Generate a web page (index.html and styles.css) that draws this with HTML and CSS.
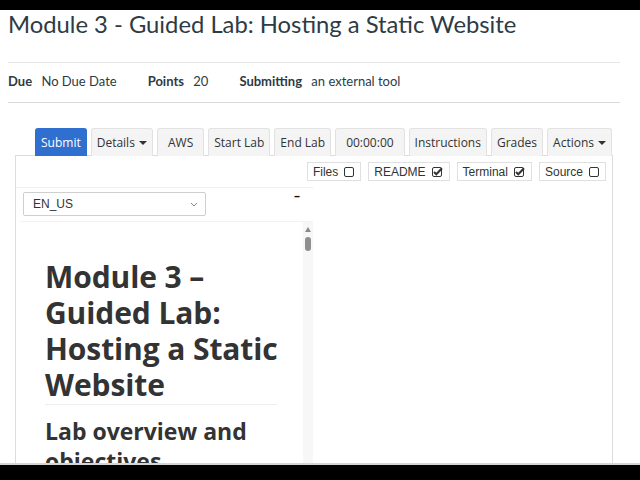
FILE: index.html
```html
<!DOCTYPE html>
<html lang="en">
  <head>
    <meta charset="UTF-8" />
    <meta name="viewport" content="width=device-width, initial-scale=1.0" />
    <title>Module 3 - Guided Lab: Hosting a Static Website</title>
    <link rel="stylesheet" href="styles.css">
  </head>
  <body>
    <div class="topbar"></div>
    <h1 class="title">Module 3 - Guided Lab: Hosting a Static Website</h1>
    <ul class="meta">
      <li><b>Due</b> No Due Date</li>
      <li><b>Points</b> 20</li>
      <li><b>Submitting</b> an external tool</li>
    </ul>
    <div class="lab">
      <nav class="toolbar">
        <button class="tool primary">Submit</button>
        <button class="tool">Details <span class="caret"></span></button>
        <button class="tool wide">AWS</button>
        <button class="tool">Start Lab</button>
        <button class="tool">End Lab</button>
        <button class="tool wide">00:00:00</button>
        <button class="tool">Instructions</button>
        <button class="tool">Grades</button>
        <button class="tool">Actions <span class="caret"></span></button>
      </nav>
      <div class="panel">
        <div class="toggles">
          <label class="toggle">Files
            <svg width="10" height="10" viewBox="0 0 10 10"><rect x="0.5" y="0.5" width="9" height="9" rx="1.5" fill="none" stroke="#333"/></svg>
          </label>
          <label class="toggle">README
            <svg width="11" height="10" viewBox="0 0 11 10"><rect x="0.5" y="0.5" width="9" height="9" rx="1.5" fill="none" stroke="#333"/><path d="M2 5 L4.3 7.3 L10 1.2" fill="none" stroke="#333" stroke-width="2"/></svg>
          </label>
          <label class="toggle">Terminal
            <svg width="11" height="10" viewBox="0 0 11 10"><rect x="0.5" y="0.5" width="9" height="9" rx="1.5" fill="none" stroke="#333"/><path d="M2 5 L4.3 7.3 L10 1.2" fill="none" stroke="#333" stroke-width="2"/></svg>
          </label>
          <label class="toggle">Source
            <svg width="10" height="10" viewBox="0 0 10 10"><rect x="0.5" y="0.5" width="9" height="9" rx="1.5" fill="none" stroke="#333"/></svg>
          </label>
        </div>
        <div class="panes">
          <section class="readme">
            <div class="readme-head">
              <div class="lang">
                <span>EN_US</span>
                <svg width="8" height="5" viewBox="0 0 8 5"><path d="M1 1 L4 4 L7 1" fill="none" stroke="#888" stroke-width="1"/></svg>
              </div>
              <span class="collapse">&ndash;</span>
            </div>
            <div class="reader">
              <article class="doc">
                <h1>Module 3 &ndash; Guided Lab: Hosting a Static Website</h1>
                <hr>
                <h2>Lab overview and objectives</h2>
              </article>
              <div class="scrollbar">
                <span class="arrow"></span>
                <span class="thumb"></span>
              </div>
            </div>
          </section>
          <section class="terminal"></section>
        </div>
      </div>
    </div>
    <div class="taskbar"></div>
  </body>
</html>
```

FILE: styles.css
```css
* {
  margin: 0;
  padding: 0;
  box-sizing: border-box;
}

body {
  background-color: #fff;
  color: #2d3b45;
  font-family: 'Lato', sans-serif;
  height: 100vh;
  overflow: hidden;
}

.topbar {
  height: 10px;
  background-color: #000;
}

.title {
  margin-left: 8px;
  font-size: 23.8px;
  font-weight: normal;
  line-height: 28px;
}

.meta {
  display: flex;
  gap: 31px;
  list-style: none;
  width: 612px;
  height: 41px;
  margin: 24px 0 0 8px;
  padding-bottom: 3px;
  border-top: 1px solid #e4e6e8;
  border-bottom: 1px solid #d8dbdd;
  align-items: center;
  font-size: 13px;
}

.meta b {
  margin-right: 6px;
}

.lab {
  margin-top: 25px;
  font-family: 'Open Sans', sans-serif;
}

.toolbar {
  display: flex;
  gap: 4px;
  padding-left: 35px;
  height: 27px;
}

.tool {
  flex: none;
  height: 28px;
  padding: 0 5px 1px;
  border: 1px solid #e2e2e2;
  border-bottom: none;
  border-radius: 3px 3px 0 0;
  background-color: #f4f4f4;
  color: #333;
  font-family: 'Open Sans', sans-serif;
  font-size: 12px;
  white-space: nowrap;
  cursor: pointer;
}

.tool.primary {
  background-color: #2f6fcf;
  border-color: #2f6fcf;
  color: #fff;
}

.tool.wide {
  padding: 0 10px 1px;
}

.caret {
  display: inline-block;
  width: 0;
  height: 0;
  margin-left: 1px;
  vertical-align: middle;
  border-left: 4px solid transparent;
  border-right: 4px solid transparent;
  border-top: 4px solid #333;
}

.panel {
  margin-left: 15px;
  width: 598px;
  height: 312px;
  border: 1px solid #dcdcdc;
  overflow: hidden;
}

.toggles {
  display: flex;
  justify-content: flex-end;
  gap: 7px;
  padding: 6px 6px 0 0;
  height: 31px;
}

.toggle {
  display: flex;
  align-items: center;
  gap: 6px;
  height: 19px;
  padding: 0 6px 0 5px;
  border: 1px solid #e0e0e0;
  color: #333;
  font-family: 'Liberation Sans', Arial, sans-serif;
  font-size: 12px;
}

.panes {
  display: flex;
  height: 100%;
}

.readme {
  width: 297px;
}

.readme-head {
  display: flex;
  align-items: flex-start;
  justify-content: space-between;
  height: 34px;
  padding: 4px 13px 0 7px;
  border-top: 1px solid #f0f0f0;
}

.lang {
  display: flex;
  align-items: center;
  justify-content: space-between;
  width: 183px;
  height: 24px;
  padding: 0 7px 0 9px;
  border: 1px solid #cfcfcf;
  border-radius: 2px;
  color: #333;
  font-family: 'Liberation Sans', Arial, sans-serif;
  font-size: 12px;
}

.collapse {
  font-weight: bold;
  font-size: 12px;
  line-height: 8px;
  color: #111;
}

.reader {
  display: flex;
  margin-left: 4px;
  border-top: 1px solid #f2f2f2;
  height: 260px;
}

.doc {
  flex: 1;
  padding: 37px 0 0 25px;
  color: #333;
}

.doc h1 {
  font-size: 30px;
  line-height: 36px;
  font-weight: bold;
  width: 245px;
  letter-spacing: -0.1px;
}

.doc hr {
  width: 232px;
  margin: 1px 0 11px;
  border: none;
  border-top: 1px solid #eee;
}

.doc h2 {
  font-size: 23px;
  line-height: 30px;
  font-weight: bold;
  width: 240px;
}

.scrollbar {
  display: flex;
  flex-direction: column;
  align-items: center;
  gap: 5px;
  width: 10px;
  padding-top: 5px;
  background-color: #f7f7f7;
}

.arrow {
  width: 0;
  height: 0;
  border-left: 3px solid transparent;
  border-right: 3px solid transparent;
  border-bottom: 5px solid #8a8a8a;
}

.thumb {
  width: 6px;
  height: 14px;
  border-radius: 3px;
  background-color: #8f8f8f;
}

.terminal {
  flex: 1;
}

.taskbar {
  position: fixed;
  left: 0;
  right: 0;
  bottom: 0;
  height: 17px;
  border-top: 2px solid #d4d4d4;
  background-color: #000;
}
```
